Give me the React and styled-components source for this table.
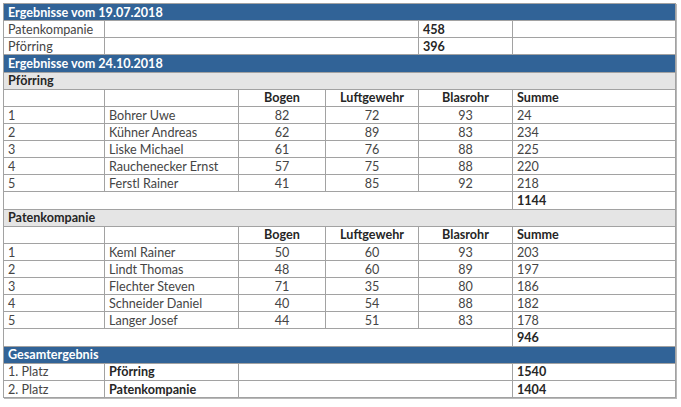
import React from "react";
import styled, { createGlobalStyle } from "styled-components";

const Global = createGlobalStyle`
  html, body { margin: 0; padding: 0; background: #ffffff; }
  body { padding: 3px; font-family: Lato, "Liberation Sans", sans-serif; }
`;

const Sheet = styled.div`
  display: grid;
  grid-template-columns: 100px 133px 86px 92px 93px 162px;
  grid-auto-rows: 16.13px;
  gap: 1px;
  padding: 1px;
  width: max-content;
  background: #a2a2a2;
  box-shadow: 1px 1px 0 #b8b8b8;
`;

const Cell = styled.div`
  grid-column: span ${(p) => p.$span || 1};
  display: flex;
  align-items: center;
  justify-content: ${(p) => (p.$center ? "center" : "flex-start")};
  padding: 2px 4px 0;
  font-size: 12.6px;
  line-height: 1;
  white-space: nowrap;
  font-weight: ${(p) => (p.$bold ? 700 : 400)};
  color: ${(p) => (p.$bold ? "#262626" : "#454545")};
  background: #ffffff;
`;

const Banner = styled(Cell)`
  grid-column: 1 / -1;
  background: #316397;
  color: #ffffff;
  font-weight: 700;
`;

const Group = styled(Cell)`
  grid-column: 1 / -1;
  background: #e5e5e5;
  color: #262626;
  font-weight: 700;
`;

const teams = [
  {
    name: "Pförring",
    total: "1144",
    rows: [
      ["1", "Bohrer Uwe", "82", "72", "93", "24"],
      ["2", "Kühner Andreas", "62", "89", "83", "234"],
      ["3", "Liske Michael", "61", "76", "88", "225"],
      ["4", "Rauchenecker Ernst", "57", "75", "88", "220"],
      ["5", "Ferstl Rainer", "41", "85", "92", "218"],
    ],
  },
  {
    name: "Patenkompanie",
    total: "946",
    rows: [
      ["1", "Keml Rainer", "50", "60", "93", "203"],
      ["2", "Lindt Thomas", "48", "60", "89", "197"],
      ["3", "Flechter Steven", "71", "35", "80", "186"],
      ["4", "Schneider Daniel", "40", "54", "88", "182"],
      ["5", "Langer Josef", "44", "51", "83", "178"],
    ],
  },
];

export default function App() {
  return (
    <>
      <Global />
      <Sheet>
        <Banner>Ergebnisse vom 19.07.2018</Banner>
        <Cell>Patenkompanie</Cell>
        <Cell $span={3} />
        <Cell $bold>458</Cell>
        <Cell />
        <Cell>Pförring</Cell>
        <Cell $span={3} />
        <Cell $bold>396</Cell>
        <Cell />

        <Banner>Ergebnisse vom 24.10.2018</Banner>
        {teams.map((t) => (
          <React.Fragment key={t.name}>
            <Group>{t.name}</Group>
            <Cell />
            <Cell />
            <Cell $bold $center>Bogen</Cell>
            <Cell $bold $center>Luftgewehr</Cell>
            <Cell $bold $center>Blasrohr</Cell>
            <Cell $bold>Summe</Cell>
            {t.rows.map((r) => (
              <React.Fragment key={r[1]}>
                <Cell>{r[0]}</Cell>
                <Cell>{r[1]}</Cell>
                <Cell $center>{r[2]}</Cell>
                <Cell $center>{r[3]}</Cell>
                <Cell $center>{r[4]}</Cell>
                <Cell>{r[5]}</Cell>
              </React.Fragment>
            ))}
            <Cell $span={5} />
            <Cell $bold>{t.total}</Cell>
          </React.Fragment>
        ))}

        <Banner>Gesamtergebnis</Banner>
        <Cell>1. Platz</Cell>
        <Cell $bold>Pförring</Cell>
        <Cell $span={3} />
        <Cell $bold>1540</Cell>
        <Cell>2. Platz</Cell>
        <Cell $bold>Patenkompanie</Cell>
        <Cell $span={3} />
        <Cell $bold>1404</Cell>
      </Sheet>
    </>
  );
}
